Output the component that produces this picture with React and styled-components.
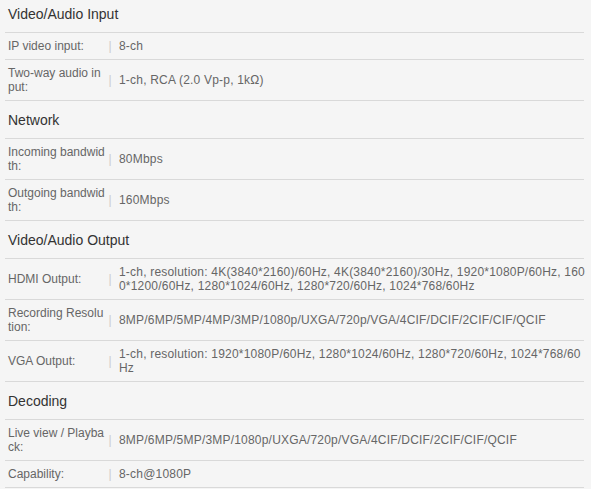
import styled, { createGlobalStyle } from "styled-components";

const GlobalStyle = createGlobalStyle`
  body {
    margin: 0;
    background: #fff;
    font-family: "Liberation Sans", Arial, sans-serif;
  }
`;

const SpecSheet = styled.div`
  width: 591px;
  background: #f5f5f5;
  padding-bottom: 2px;
`;

const Heading = styled.h3`
  margin: 0 7px 0 5px;
  padding: ${(p) => (p.$first ? "5px" : "10px")} 3px 9px;
  font-size: 14px;
  line-height: 18px;
  font-weight: normal;
  color: #333;
  border-bottom: 1px solid #d9d9d9;
`;

const Row = styled.div`
  display: flex;
  align-items: center;
  margin: 0 7px 0 5px;
  padding: 6px 0 6px 3px;
  border-bottom: 1px solid #d9d9d9;
  font-size: 12px;
  line-height: 14px;
  color: #666;
`;

const Label = styled.div`
  flex: 0 0 97.5px;
  word-break: break-all;
`;

const Sep = styled.span`
  flex: 0 0 9px;
  text-align: center;
  color: #ccc;
`;

const Value = styled.div`
  flex: 0 0 468px;
  margin-left: 4.5px;
  word-break: break-all;
  letter-spacing: 0.2px;
`;

const specs = [
  {
    title: "Video/Audio Input",
    rows: [
      ["IP video input:", "8-ch"],
      ["Two-way audio input:", "1-ch, RCA (2.0 Vp-p, 1kΩ)"],
    ],
  },
  {
    title: "Network",
    rows: [
      ["Incoming bandwidth:", "80Mbps"],
      ["Outgoing bandwidth:", "160Mbps"],
    ],
  },
  {
    title: "Video/Audio Output",
    rows: [
      [
        "HDMI Output:",
        "1-ch, resolution: 4K(3840*2160)/60Hz, 4K(3840*2160)/30Hz, 1920*1080P/60Hz, 1600*1200/60Hz, 1280*1024/60Hz, 1280*720/60Hz, 1024*768/60Hz",
      ],
      [
        "Recording Resolution:",
        "8MP/6MP/5MP/4MP/3MP/1080p/UXGA/720p/VGA/4CIF/DCIF/2CIF/CIF/QCIF",
      ],
      [
        "VGA Output:",
        "1-ch, resolution: 1920*1080P/60Hz, 1280*1024/60Hz, 1280*720/60Hz, 1024*768/60Hz",
      ],
    ],
  },
  {
    title: "Decoding",
    rows: [
      [
        "Live view / Playback:",
        "8MP/6MP/5MP/3MP/1080p/UXGA/720p/VGA/4CIF/DCIF/2CIF/CIF/QCIF",
      ],
      ["Capability:", "8-ch@1080P"],
    ],
  },
];

export default function App() {
  return (
    <>
      <GlobalStyle />
      <SpecSheet>
        {specs.map((section, i) => (
          <section key={section.title}>
            <Heading $first={i === 0}>{section.title}</Heading>
            {section.rows.map(([label, value]) => (
              <Row key={label}>
                <Label>{label}</Label>
                <Sep>|</Sep>
                <Value>{value}</Value>
              </Row>
            ))}
          </section>
        ))}
      </SpecSheet>
    </>
  );
}
